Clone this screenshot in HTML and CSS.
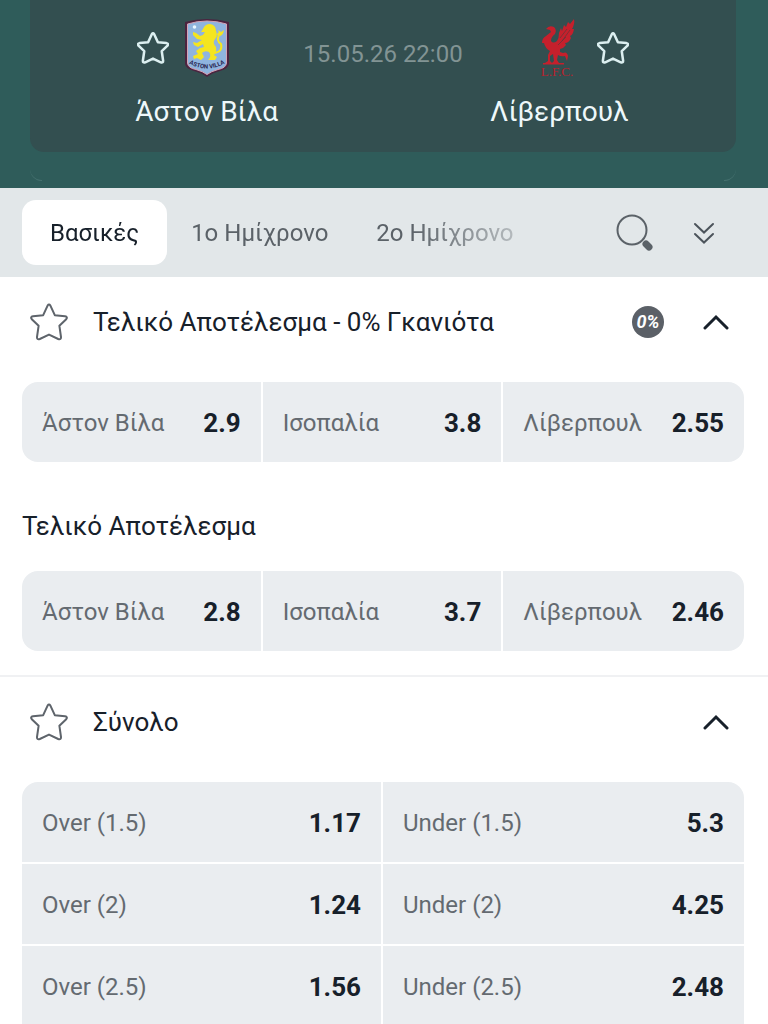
FILE: index.html
```
<!DOCTYPE html>
<html lang="el">

<head>
    <meta charset="utf-8">
    <meta name="viewport" content="width=device-width, initial-scale=1.0">
    <title>Άστον Βίλα - Λίβερπουλ</title>
    <link rel="stylesheet" href="styles.css">
</head>

<body>
    <!-- shared star shape -->
    <svg class="sprite" aria-hidden="true">
        <symbol id="star" viewBox="0 0 38 38">
            <path d="M17.6 2.6Q19 0.6 20.4 2.6L24.8 12.2L35 13.2Q38 13.8 36.2 16.2L29.4 22.8L31 34Q31.2 37 28.2 36L19 31.6L9.8 36Q6.8 37 7 34L8.6 22.8L1.8 16.2Q0 13.8 3 13.2L13.2 12.2Z" />
        </symbol>
    </svg>

    <header class="top">
        <div class="match">
            <div class="team">
                <div class="team-icons">
                    <button class="icon-btn" aria-label="Άστον Βίλα"><svg class="star star-light"><use href="#star" /></svg></button>
                    <svg class="crest" viewBox="0 0 44 60" aria-hidden="true">
                        <path d="M0 4Q11 1 22 1T44 4V46Q43 51 35 53Q27 55 22 59Q17 55 9 53Q1 51 0 46Z" fill="#4b2440" />
                        <path d="M2.500 6Q12 3 22 3T41.500 6V45Q41 50 33 51.500Q26 53.500 22 56.500Q18 53.500 11 51.500Q3 50 2.500 45Z" fill="#8fb4de" stroke="#d4a3b5" stroke-width="1" />
                        <circle cx="9.500" cy="9" r="1.800" fill="#e8f6ff" />
                        <g fill="#f5e51f">
                            <path d="M18 11Q20 6 25 6Q31 7 31 13Q33 18 30 21Q27 25 31 29Q32 34 29 37L32 39L30 42H23Q27 38 24 34Q20 32 17 35L19 39L16 42L12 40L9 41L8 38L13 36L11 33L15 30L19 29L18 26L13 29L9 27L8 24L12 25L17 22L12 21L8 17L8 14L11 15L15 18L18 17L20 14L16 14Z" />
                            <path d="M33 12L36 14L39 12Q38 18 34 18L31 16Q35 15 33 12Z" />
                        </g>
                        <path d="M29 35Q38 34 36 26Q31 23 34 17" fill="none" stroke="#f5e51f" stroke-width="2" />
                        <path id="ribbon" d="M5 46Q22 55 39 46" fill="none" />
                        <text class="villa-text"><textPath href="#ribbon" startOffset="50%">ASTON VILLA</textPath></text>
                    </svg>
                </div>
                <h2 class="team-name">Άστον Βίλα</h2>
            </div>

            <time class="kickoff" datetime="2026-05-15T22:00">15.05.26 22:00</time>

            <div class="team">
                <div class="team-icons team-icons-away">
                    <svg class="crest" viewBox="0 0 44 60" aria-hidden="true">
                        <g fill="#c5202c">
                            <path d="M9 11Q12 7 17 9Q20 12 18 16Q14 19 14 23Q16 26 20 23Q22 20 22 15L24 10L25 13L27 7L29 9L31 4L33 6L37 1Q38 6 35 11L37 11Q36 17 33 18L34 20Q32 25 28 25L29 27Q27 30 23 31L23 34L26 35Q30 33 31 38L30 43L28 38Q24 39 21 37L20 42L22 45H15L17 43L16 36L13 38L13 43L15 45H8L11 43L11 37L13 33Q8 30 7 25L5 25Q5 20 9 18L14 14L13 12Z" />
                            <path d="M6 45H27V46.500H6Z" />
                        </g>
                        <path d="M25 23L33 12M23 20L30 11M21 27L29 19" stroke="#6b3438" stroke-width="0.800" />
                        <text class="lfc-text" x="20" y="58">L.F.C.</text>
                    </svg>
                    <button class="icon-btn" aria-label="Λίβερπουλ"><svg class="star star-light"><use href="#star" /></svg></button>
                </div>
                <h2 class="team-name">Λίβερπουλ</h2>
            </div>
        </div>
        <div class="next-edge"></div>
    </header>

    <nav class="tabs">
        <div class="tab-list">
            <button class="tab tab-active">Βασικές</button>
            <button class="tab">1ο Ημίχρονο</button>
            <button class="tab">2ο Ημίχρονο</button>
        </div>
        <button class="icon-btn" aria-label="Αναζήτηση">
            <svg class="search" viewBox="0 0 40 40">
                <circle cx="17" cy="17" r="14.500" />
                <path class="handle" d="M31 31L34 34" />
            </svg>
        </button>
        <button class="icon-btn" aria-label="Σύμπτυξη">
            <svg class="collapse" viewBox="0 0 22 22">
                <path d="M2 2L11 10.500L20 2M2 12L11 20.500L20 12" />
            </svg>
        </button>
    </nav>

    <main>
        <section class="market">
            <div class="market-head">
                <button class="icon-btn" aria-label="Αγαπημένο"><svg class="star star-big"><use href="#star" /></svg></button>
                <h3 class="market-title">Τελικό Αποτέλεσμα - 0% Γκανιότα</h3>
                <span class="zero">0%</span>
                <button class="icon-btn" aria-label="Κλείσιμο"><svg class="chevron" viewBox="0 0 26 16"><path d="M2 14L13 3L24 14" /></svg></button>
            </div>
            <div class="odds odds-3">
                <button class="odd"><span>Άστον Βίλα</span><b>2.9</b></button>
                <button class="odd"><span>Ισοπαλία</span><b>3.8</b></button>
                <button class="odd"><span>Λίβερπουλ</span><b>2.55</b></button>
            </div>
            <h3 class="market-title market-sub">Τελικό Αποτέλεσμα</h3>
            <div class="odds odds-3">
                <button class="odd"><span>Άστον Βίλα</span><b>2.8</b></button>
                <button class="odd"><span>Ισοπαλία</span><b>3.7</b></button>
                <button class="odd"><span>Λίβερπουλ</span><b>2.46</b></button>
            </div>
        </section>

        <section class="market">
            <div class="market-head">
                <button class="icon-btn" aria-label="Αγαπημένο"><svg class="star star-big"><use href="#star" /></svg></button>
                <h3 class="market-title">Σύνολο</h3>
                <button class="icon-btn" aria-label="Κλείσιμο"><svg class="chevron" viewBox="0 0 26 16"><path d="M2 14L13 3L24 14" /></svg></button>
            </div>
            <div class="odds odds-2">
                <button class="odd"><span>Over (1.5)</span><b>1.17</b></button>
                <button class="odd"><span>Under (1.5)</span><b>5.3</b></button>
                <button class="odd"><span>Over (2)</span><b>1.24</b></button>
                <button class="odd"><span>Under (2)</span><b>4.25</b></button>
                <button class="odd"><span>Over (2.5)</span><b>1.56</b></button>
                <button class="odd"><span>Under (2.5)</span><b>2.48</b></button>
            </div>
        </section>
    </main>
</body>

</html>
```
FILE: styles.css
```
* {
    box-sizing: border-box;
}

body {
    margin: 0;
    height: 100vh;
    overflow: hidden;
    background-color: #fff;
    color: #17202a;
    font-family: Roboto, "Liberation Sans", sans-serif;
    font-size: 24px;
}

h2,
h3 {
    margin: 0;
    font-weight: 400;
}

button {
    margin: 0;
    padding: 0;
    border: none;
    background: none;
    font: inherit;
    color: inherit;
    cursor: pointer;
}

svg {
    display: block;
}

.sprite {
    position: absolute;
    width: 0;
    height: 0;
}

.icon-btn {
    flex: none;
}

/* match header */
.top {
    padding: 0 32px 0 30px;
    background-color: #2f5c5a;
}

.match {
    display: grid;
    grid-template-columns: 1fr auto 1fr;
    padding: 18px 80px 24px;
    border-radius: 0 0 14px 14px;
    background-color: #334f50;
}

.team {
    display: flex;
    flex-direction: column;
    align-items: center;
}

.team-icons {
    display: grid;
    grid-template-columns: 32px 44px 32px;
    gap: 16px;
    align-items: center;
}

.team-icons-away .crest {
    grid-column: 2;
}

.team-name {
    margin-top: 18px;
    font-size: 28px;
    line-height: 32px;
    color: #eef8fa;
    white-space: nowrap;
}

.kickoff {
    line-height: 72px;
    color: #829494;
}

.crest {
    width: 44px;
    height: 60px;
    overflow: visible;
}

.villa-text {
    font: bold 6px Roboto, sans-serif;
    fill: #29264f;
    text-anchor: middle;
}

.lfc-text {
    font: 13px "Liberation Serif", serif;
    fill: #b9222d;
    text-anchor: middle;
}

/* only the corners of the next card show */
.next-edge {
    position: relative;
    height: 36px;
}

.next-edge::before,
.next-edge::after {
    content: "";
    position: absolute;
    bottom: 7px;
    width: 12px;
    height: 12px;
    border-bottom: 1px solid #477270;
}

.next-edge::before {
    left: 0;
    border-radius: 0 0 0 12px;
}

.next-edge::after {
    right: 0;
    border-radius: 0 0 12px 0;
}

.star {
    width: 38px;
    height: 38px;
    overflow: visible;
    fill: none;
    stroke: #5e646b;
    stroke-width: 2;
    stroke-linejoin: round;
}

.star-light {
    width: 32px;
    height: 32px;
    stroke: #dceff0;
    stroke-width: 3;
}

/* tabs */
.tabs {
    display: flex;
    align-items: center;
    gap: 38px;
    padding: 12px 53px 12px 22px;
    background-color: #e2e7e9;
}

.tab-list {
    display: flex;
    flex: 1;
    overflow: hidden;
    -webkit-mask-image: linear-gradient(to right, #000 70%, transparent 98%);
    mask-image: linear-gradient(to right, #000 70%, transparent 98%);
}

.tab {
    height: 65px;
    padding: 0 24px;
    border-radius: 14px;
    color: #5b6268;
    white-space: nowrap;
}

.tab-active {
    padding: 0 28px;
    background-color: #fff;
    color: #17202a;
}

.search {
    width: 40px;
    height: 40px;
    fill: none;
    stroke: #5b6268;
    stroke-width: 2;
}

.search .handle {
    stroke-width: 7;
    stroke-linecap: round;
}

.collapse {
    width: 22px;
    height: 22px;
    overflow: visible;
    fill: none;
    stroke: #4c545b;
    stroke-width: 2;
    stroke-linecap: round;
}

/* markets */
.market {
    padding: 0 24px 24px 22px;
    border-bottom: 2px solid #f0f1f3;
}

.market-head {
    display: flex;
    align-items: center;
    gap: 25px;
    height: 105px;
    padding: 0 15px 16px 8px;
}

.market-title {
    flex: 1;
    font-size: 26px;
    line-height: 32px;
}

.market-sub {
    padding: 48px 0 29px;
}

.zero {
    width: 32px;
    margin-right: 14px;
    border-radius: 50%;
    background-color: #5b6067;
    color: #fff;
    font-size: 18px;
    font-style: italic;
    font-weight: 700;
    line-height: 32px;
    text-align: center;
}

.chevron {
    width: 26px;
    height: 16px;
    fill: none;
    stroke: #17202a;
    stroke-width: 3;
    stroke-linecap: round;
}

.odds {
    display: grid;
    row-gap: 2px;
    overflow: hidden;
    border-radius: 16px;
}

.odds-3 {
    grid-template-columns: repeat(3, 1fr);
}

.odds-2 {
    grid-template-columns: repeat(2, 1fr);
    border-radius: 16px 16px 0 0;
}

.odd {
    display: flex;
    align-items: center;
    justify-content: space-between;
    height: 80px;
    padding: 2px 20px 0;
    background-color: #eaedf0;
    color: #646a70;
}

/* white line between the columns */
.odds-3 .odd:not(:last-child),
.odds-2 .odd:nth-child(odd) {
    border-right: 2px solid #fff;
}

.odd b {
    color: #17202a;
    font-size: 26px;
    font-weight: 700;
}
```
